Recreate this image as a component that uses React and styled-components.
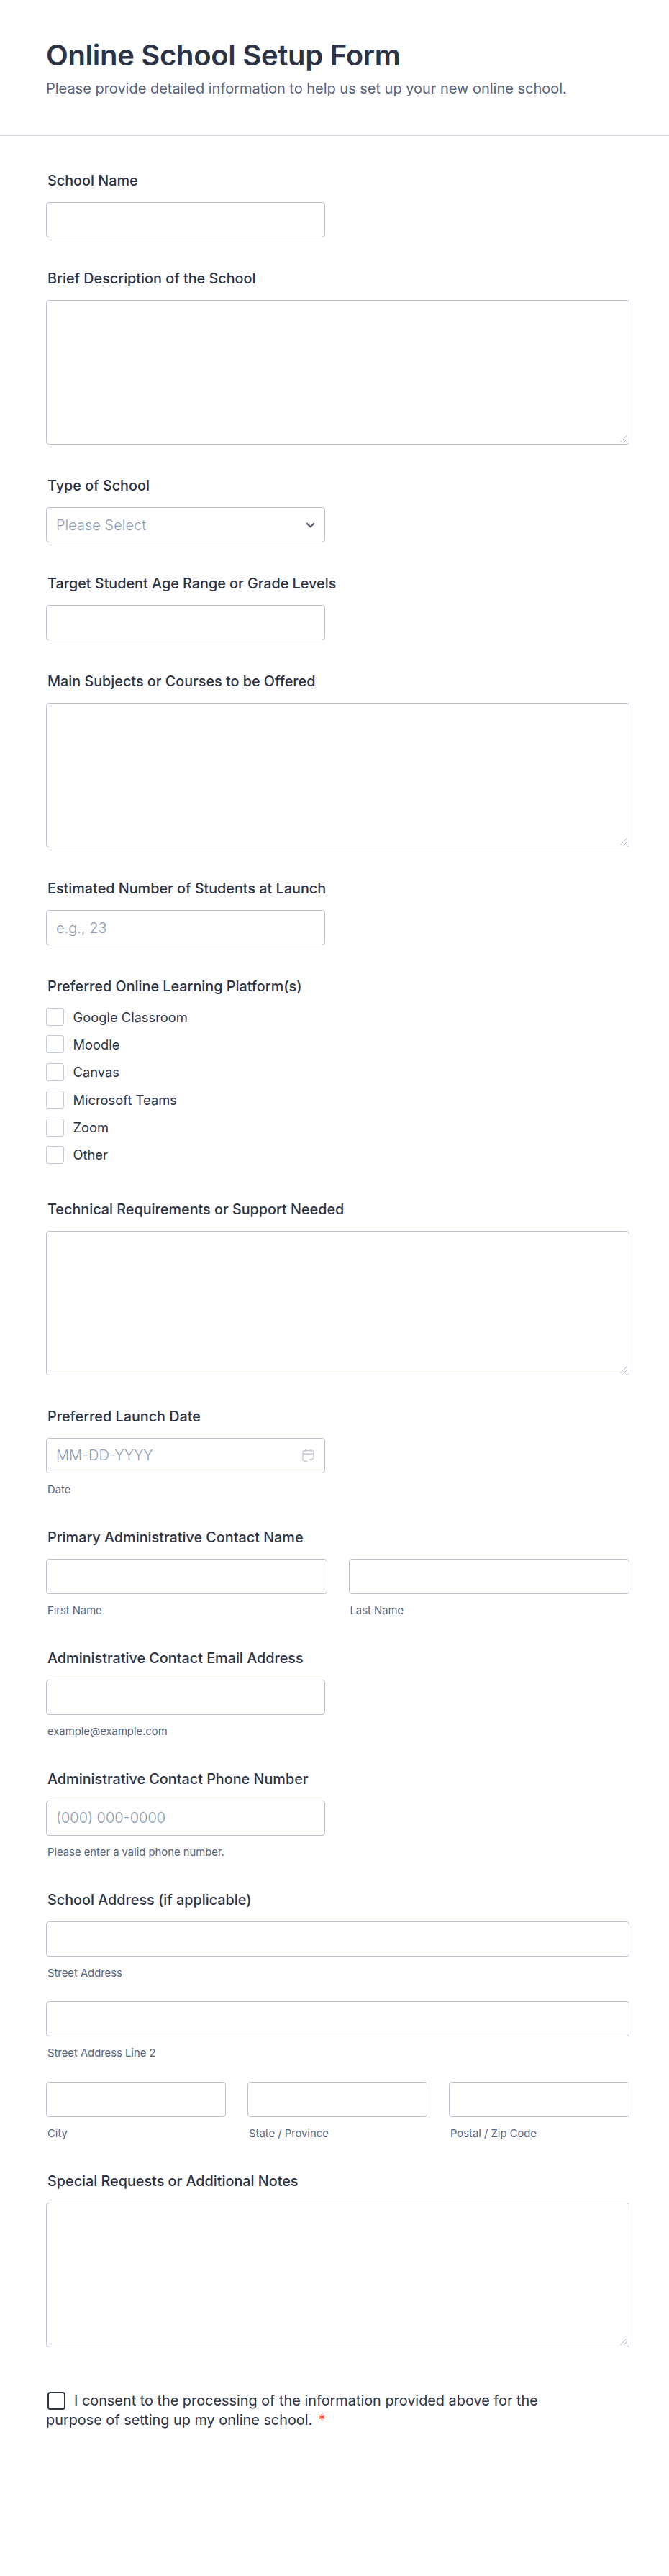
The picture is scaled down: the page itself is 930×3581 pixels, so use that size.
import React from "react";
import styled, { createGlobalStyle } from "styled-components";

const Global = createGlobalStyle`
  html, body { margin: 0; padding: 0; background: #fff; }
  body { font-family: Inter, "Noto Sans", sans-serif; color: #2c3345; }
  * { box-sizing: border-box; }
`;
const Page = styled.div`
  width: 930px;
  min-height: 3581px;
  background: #fff;
`;
const Header = styled.header`
  height: 189px;
  padding: 52px 64px 0;
  border-bottom: 1px solid #d3d6e5;
`;
const Title = styled.h1`
  margin: 0;
  font-size: 40px;
  line-height: 50px;
  font-weight: 600;
  letter-spacing: -0.3px;
  color: #2c3345;
`;
const Subtitle = styled.p`
  margin: 6px 0 0;
  font-size: 20px;
  line-height: 30px;
  letter-spacing: -0.02px;
  color: #57647e;
`;
const Form = styled.main`
  padding: 52px 55px 0 64px;
  display: flex;
  flex-direction: column;
  gap: 47px;
`;
const Field = styled.section`
  display: flex;
  flex-direction: column;
`;
const Label = styled.label`
  margin: 0 0 20px 2px;
  font-size: 19.8px;
  line-height: 20px;
  font-weight: 450;
  color: #2c3345;
`;
const Input = styled.div`
  position: relative;
  width: ${(p) => p.$width || "388px"};
  height: 49px;
  padding: 0 13px;
  display: flex;
  align-items: center;
  justify-content: space-between;
  background: #fff;
  border: 1px solid #bcc1ce;
  border-radius: 4px;
  font-size: 20px;
  font-weight: 300;
  color: #8d9db5;
`;
const TextArea = styled.div`
  position: relative;
  width: 811px;
  height: 201px;
  background: #fff;
  border: 1px solid #bcc1ce;
  border-radius: 4px;
`;
const Grip = styled.svg`
  position: absolute;
  right: 1px;
  bottom: 1px;
  width: 12px;
  height: 12px;
`;
const Sub = styled.span`
  margin: 14px 0 0 2px;
  font-size: 14.8px;
  line-height: 18px;
  color: #57647e;
`;
const Row = styled.div`
  display: flex;
  gap: 30px;
`;
const Col = styled.div`
  display: flex;
  flex-direction: column;
`;
const Stack = styled.div`
  display: flex;
  flex-direction: column;
  gap: 30.5px;
`;
const Options = styled.div`
  display: flex;
  flex-direction: column;
  gap: 13.4px;
  margin-bottom: 6px;
`;
const Option = styled.div`
  display: flex;
  align-items: center;
  gap: 12.5px;
  height: 25px;
  font-size: 18.35px;
  color: #2c3345;
`;
const Box = styled.span`
  width: 25px;
  height: 25px;
  flex: none;
  background: #fff;
  border: 1px solid #c3cad8;
  border-radius: 3px;
`;
const Consent = styled.p`
  margin: 14px 0 0;
  width: 700px;
  font-size: 19.85px;
  line-height: 27px;
  color: #2c3345;
`;
const ConsentBox = styled.span`
  display: inline-block;
  width: 25px;
  height: 25px;
  margin: 0 12px 0 2px;
  vertical-align: -6px;
  border: 2px solid #2c3345;
  border-radius: 4px;
  background: #fff;
`;
const Req = styled.span`
  margin-left: 8px;
  color: #f5281e;
  font-weight: 600;
`;

const GripIcon = () => (
  <Grip viewBox="0 0 12 12" fill="none" stroke="#b4b8c4" strokeWidth="1">
    <path d="M1 11 11 1M6 11l5-5" />
  </Grip>
);
const Area = () => (
  <TextArea>
    <GripIcon />
  </TextArea>
);
const Chevron = () => (
  <svg width="13" height="8" viewBox="0 0 13 8" fill="none" stroke="#4f5a75" strokeWidth="2.2">
    <path d="M1.2 1.2 6.5 6.2l5.3-5" />
  </svg>
);
const Calendar = () => (
  <svg width="17" height="18" viewBox="0 0 17 18" fill="none" stroke="#c5c9d3" strokeWidth="1.3" strokeLinecap="round" style={{ marginRight: 1 }}>
    <path d="M7 17H3a2 2 0 0 1-2-2V4.500a2 2 0 0 1 2-2h11a2 2 0 0 1 2 2V11M1 7h15M5 1v3M12 1v3M10.500 14.500l1.800 1.800 3.500-3.500" />
  </svg>
);

export default function App() {
  return (
    <Page>
      <Global />
      <Header>
        <Title>Online School Setup Form</Title>
        <Subtitle>Please provide detailed information to help us set up your new online school.</Subtitle>
      </Header>
      <Form>
        <Field>
          <Label>School Name</Label>
          <Input />
        </Field>
        <Field>
          <Label>Brief Description of the School</Label>
          <Area />
        </Field>
        <Field>
          <Label>Type of School</Label>
          <Input>
            Please Select
            <Chevron />
          </Input>
        </Field>
        <Field>
          <Label>Target Student Age Range or Grade Levels</Label>
          <Input />
        </Field>
        <Field>
          <Label>Main Subjects or Courses to be Offered</Label>
          <Area />
        </Field>
        <Field>
          <Label>Estimated Number of Students at Launch</Label>
          <Input>e.g., 23</Input>
        </Field>
        <Field>
          <Label>Preferred Online Learning Platform(s)</Label>
          <Options>
            {["Google Classroom", "Moodle", "Canvas", "Microsoft Teams", "Zoom", "Other"].map((o) => (
              <Option key={o}>
                <Box />
                {o}
              </Option>
            ))}
          </Options>
        </Field>
        <Field>
          <Label>Technical Requirements or Support Needed</Label>
          <Area />
        </Field>
        <Field>
          <Label>Preferred Launch Date</Label>
          <Input>
            MM-DD-YYYY
            <Calendar />
          </Input>
          <Sub>Date</Sub>
        </Field>
        <Field>
          <Label>Primary Administrative Contact Name</Label>
          <Row>
            <Col>
              <Input $width="390.5px" />
              <Sub>First Name</Sub>
            </Col>
            <Col>
              <Input $width="390.5px" />
              <Sub>Last Name</Sub>
            </Col>
          </Row>
        </Field>
        <Field>
          <Label>Administrative Contact Email Address</Label>
          <Input />
          <Sub>example@example.com</Sub>
        </Field>
        <Field>
          <Label>Administrative Contact Phone Number</Label>
          <Input>(000) 000-0000</Input>
          <Sub>Please enter a valid phone number.</Sub>
        </Field>
        <Field>
          <Label>School Address (if applicable)</Label>
          <Stack>
            <Col>
              <Input $width="811px" />
              <Sub>Street Address</Sub>
            </Col>
            <Col>
              <Input $width="811px" />
              <Sub>Street Address Line 2</Sub>
            </Col>
            <Row>
              <Col>
                <Input $width="250px" />
                <Sub>City</Sub>
              </Col>
              <Col>
                <Input $width="250px" />
                <Sub>State / Province</Sub>
              </Col>
              <Col>
                <Input $width="251px" />
                <Sub>Postal / Zip Code</Sub>
              </Col>
            </Row>
          </Stack>
        </Field>
        <Field>
          <Label>Special Requests or Additional Notes</Label>
          <Area />
        </Field>
        <Consent>
          <ConsentBox />I consent to the processing of the information provided above for the purpose of setting up my online school.
          <Req>*</Req>
        </Consent>
      </Form>
    </Page>
  );
}
